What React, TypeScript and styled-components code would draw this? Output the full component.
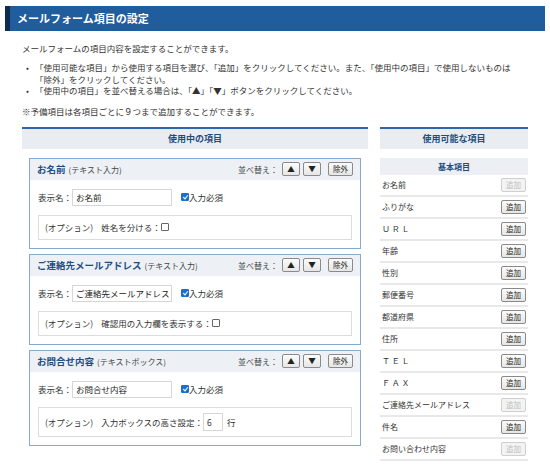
import React from "react";
import styled, { createGlobalStyle } from "styled-components";

const Global = createGlobalStyle`
  html, body { margin: 0; padding: 0; background: #fff; }
  body { font-family: "Noto Sans CJK JP", "Noto Sans", sans-serif; color: #333; width: 550px; }
  * { box-sizing: border-box; }
`;

const Page = styled.div`
  width: 550px;
  padding: 6px 5px 0 5px;
`;

const TitleBar = styled.h1`
  margin: 0;
  height: 25px;
  background: #1f5d9d;
  border-left: 5px solid #0e2c50;
  color: #fff;
  font-size: 11px;
  font-weight: 700;
  line-height: 25px;
  padding-left: 7px;
`;

const Content = styled.div`
  padding: 0 17px;
  font-size: 8.5px;
`;

const Lead = styled.p`
  margin: 11px 0 0;
  line-height: 12px;
`;

const Bullets = styled.ul`
  list-style: none;
  margin: 8px 0 0;
  padding: 0 0 0 13px;
  line-height: 11.5px;
`;

const Bullet = styled.li`
  position: relative;
  &::before {
    content: "•";
    position: absolute;
    left: -9px;
    top: 0;
  }
`;

const Note = styled.p`
  margin: 8px 0 0;
  line-height: 12px;
`;

const Columns = styled.div`
  display: flex;
  align-items: flex-start;
  gap: 12px;
  margin-top: 10px;
`;

const LeftCol = styled.div`
  width: 346px;
`;

const RightCol = styled.div`
  width: 148px;
`;

const SectionHead = styled.div`
  height: 22px;
  border-top: 2px solid #2c68a8;
  background: #e9edf1;
  color: #1e4d80;
  font-weight: 700;
  font-size: 9px;
  text-align: center;
  line-height: 20px;
`;

const Cards = styled.div`
  display: flex;
  flex-direction: column;
  gap: 5px;
  padding: 9px 7px 0;
`;

const Card = styled.div`
  border: 1px solid #88a9d0;
  background: #fff;
`;

const CardHead = styled.div`
  height: 21px;
  background: #edf1f5;
  display: flex;
  align-items: center;
  padding: 0 7px;
`;

const CardTitle = styled.span`
  color: #1d4f86;
  font-weight: 700;
  font-size: 9.5px;
`;

const CardType = styled.span`
  color: #444;
  font-size: 8px;
  margin-left: 3px;
`;

const Sorter = styled.div`
  margin-left: auto;
  display: flex;
  align-items: center;
`;

const SortLabel = styled.span`
  font-size: 8px;
  color: #444;
  margin-right: 4px;
`;

const Btn = styled.button<{ $w: number; $gap?: number; $disabled?: boolean }>`
  width: ${(p) => p.$w}px;
  height: 14px;
  margin-left: ${(p) => p.$gap ?? 0}px;
  padding: 0;
  border: 1px solid ${(p) => (p.$disabled ? "#cfcfcf" : "#8a8a8a")};
  border-radius: 2px;
  background: ${(p) => (p.$disabled ? "#f3f3f3" : "linear-gradient(#fbfbfb, #e6e6e6)")};
  color: ${(p) => (p.$disabled ? "#bdbdbd" : "#222")};
  font-family: inherit;
  font-size: 7.5px;
  line-height: 12px;
  display: flex;
  align-items: center;
  justify-content: center;
`;

const CardBody = styled.div`
  padding: 9px 8px 8px 8px;
`;

const NameRow = styled.div`
  display: flex;
  align-items: center;
  height: 17px;
`;

const Label = styled.span`
  width: 34px;
  font-size: 8.5px;
`;

const TextInput = styled.div`
  width: 100px;
  height: 17px;
  border: 1px solid #d6d6d6;
  padding: 0 3px;
  line-height: 15px;
  font-size: 8.5px;
  color: #222;
  white-space: nowrap;
  overflow: hidden;
`;

const Check = styled.span<{ $checked?: boolean }>`
  display: inline-block;
  width: 8px;
  height: 8px;
  border-radius: 1px;
  border: 1px solid ${(p) => (p.$checked ? "#1a6fd0" : "#666")};
  background: ${(p) => (p.$checked ? "#1a6fd0" : "#fff")};
  position: relative;
  flex: none;
  ${(p) =>
    p.$checked &&
    `&::after{content:"";position:absolute;left:2px;top:0px;width:2px;height:4px;border:solid #fff;border-width:0 1.2px 1.2px 0;transform:rotate(40deg);}`}
`;

const Required = styled.label`
  display: flex;
  align-items: center;
  margin-left: 9px;
  font-size: 8.5px;
`;

const OptionBox = styled.div<{ $h: number }>`
  margin-top: 9px;
  height: ${(p) => p.$h}px;
  border: 1px solid #dcdcdc;
  display: flex;
  align-items: center;
  padding: 0 6px;
  font-size: 8.5px;
`;

const OptTag = styled.span`
  margin-right: 8px;
`;

const SmallInput = styled.div`
  width: 20px;
  height: 18px;
  border: 1px solid #d6d6d6;
  line-height: 16px;
  padding-left: 3px;
  margin-right: 4px;
`;

const SubHead = styled.div`
  margin-top: 9px;
  height: 17px;
  background: #eceff3;
  color: #1e4d80;
  font-weight: 700;
  font-size: 8px;
  text-align: center;
  line-height: 17px;
`;

const ListRow = styled.div`
  height: 22px;
  border-bottom: 2px solid #e8e8e8;
  display: flex;
  align-items: center;
  padding: 0 2px 0 2px;
  font-size: 8px;
  color: #333;
`;

const RowName = styled.span`
  flex: 1;
`;

type CardProps = {
  title: string;
  type: string;
  value: string;
  children: React.ReactNode;
  optH: number;
};

function ItemCard({ title, type, value, children, optH }: CardProps) {
  return (
    <Card>
      <CardHead>
        <CardTitle>{title}</CardTitle>
        <CardType>({type})</CardType>
        <Sorter>
          <SortLabel>並べ替え：</SortLabel>
          <Btn $w={18}>▲</Btn>
          <Btn $w={18} $gap={3}>▼</Btn>
          <Btn $w={25} $gap={7}>除外</Btn>
        </Sorter>
      </CardHead>
      <CardBody>
        <NameRow>
          <Label>表示名：</Label>
          <TextInput>{value}</TextInput>
          <Required>
            <Check $checked />
            入力必須
          </Required>
        </NameRow>
        <OptionBox $h={optH}>
          <OptTag>(オプション)</OptTag>
          {children}
        </OptionBox>
      </CardBody>
    </Card>
  );
}

const items: { name: string; disabled?: boolean }[] = [
  { name: "お名前", disabled: true },
  { name: "ふりがな" },
  { name: "Ｕ Ｒ Ｌ" },
  { name: "年齢" },
  { name: "性別" },
  { name: "郵便番号" },
  { name: "都道府県" },
  { name: "住所" },
  { name: "Ｔ Ｅ Ｌ" },
  { name: "Ｆ Ａ Ｘ" },
  { name: "ご連絡先メールアドレス", disabled: true },
  { name: "件名" },
  { name: "お問い合わせ内容", disabled: true },
];

export default function App() {
  return (
    <Page>
      <Global />
      <TitleBar>メールフォーム項目の設定</TitleBar>
      <Content>
        <Lead>メールフォームの項目内容を設定することができます。</Lead>
        <Bullets>
          <Bullet>
            「使用可能な項目」から使用する項目を選び、「追加」をクリックしてください。また、「使用中の項目」で使用しないものは
            <br />
            「除外」をクリックしてください。
          </Bullet>
          <Bullet>「使用中の項目」を並べ替える場合は、「▲」「▼」ボタンをクリックしてください。</Bullet>
        </Bullets>
        <Note>※予備項目は各項目ごとに９つまで追加することができます。</Note>
        <Columns>
          <LeftCol>
            <SectionHead>使用中の項目</SectionHead>
            <Cards>
              <ItemCard title="お名前" type="テキスト入力" value="お名前" optH={25}>
                姓名を分ける：
                <Check />
              </ItemCard>
              <ItemCard title="ご連絡先メールアドレス" type="テキスト入力" value="ご連絡先メールアドレス" optH={25}>
                確認用の入力欄を表示する：
                <Check />
              </ItemCard>
              <ItemCard title="お問合せ内容" type="テキストボックス" value="お問合せ内容" optH={30}>
                入力ボックスの高さ設定：
                <SmallInput>6</SmallInput>
                行
              </ItemCard>
            </Cards>
          </LeftCol>
          <RightCol>
            <SectionHead>使用可能な項目</SectionHead>
            <SubHead>基本項目</SubHead>
            {items.map((it) => (
              <ListRow key={it.name}>
                <RowName>{it.name}</RowName>
                <Btn $w={25} $disabled={it.disabled}>追加</Btn>
              </ListRow>
            ))}
          </RightCol>
        </Columns>
      </Content>
    </Page>
  );
}
